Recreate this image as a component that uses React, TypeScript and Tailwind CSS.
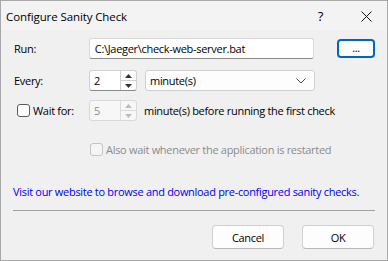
import React from "react";

function Spin({ value, disabled }: { value: string; disabled?: boolean }) {
  const border = disabled ? "border-[#d9d9d9] bg-[#f7f7f7]" : "border-[#d0d0d0] border-b-[#8a8a8a] bg-white";
  const arrow = disabled ? "#bdbdbd" : "#333333";
  return (
    <div className={`flex h-[21px] w-[48px] rounded-[3px] border ${border}`}>
      <div className={`flex-1 pl-[4px] leading-[19px] ${disabled ? "text-[#8c8c8c]" : "text-black"}`}>{value}</div>
      <div className={`flex w-[16px] flex-col border-l ${disabled ? "border-[#dcdcdc]" : "border-[#cfcfcf]"}`}>
        <div className={`flex flex-1 items-center justify-center border-b ${disabled ? "border-[#dcdcdc]" : "border-[#cfcfcf]"}`}>
          <svg width="7" height="4" viewBox="0 0 7 4"><path d="M0 4 L3.5 0 L7 4 Z" fill={arrow} /></svg>
        </div>
        <div className="flex flex-1 items-center justify-center">
          <svg width="7" height="4" viewBox="0 0 7 4"><path d="M0 0 L3.5 4 L7 0 Z" fill={arrow} /></svg>
        </div>
      </div>
    </div>
  );
}

function Check({ disabled }: { disabled?: boolean }) {
  return (
    <div
      className={`h-[13px] w-[13px] shrink-0 rounded-[3px] border ${
        disabled ? "border-[#c4c4c4] bg-[#f5f5f5]" : "border-[#5a5a5a] bg-white"
      }`}
    />
  );
}

export default function App() {
  return (
    <div
      className="flex h-[261px] w-[388px] flex-col overflow-hidden border border-[#a8a8a8] bg-[#f0f0f0] text-[11px] leading-[15px] tracking-[-0.3px] text-black"
      style={{ fontFamily: '"Open Sans", "Noto Sans", sans-serif' }}
    >
      {/* title bar */}
      <div className="flex h-[30px] shrink-0 items-center bg-[#f3f3f3]">
        <span className="ml-[5px] flex-1 text-[11.5px] tracking-[-0.1px]">Configure Sanity Check</span>
        <span className="mr-[38px] text-[13px]">?</span>
        <svg className="mr-[15px]" width="11" height="11" viewBox="0 0 11 11">
          <path d="M0.5 0.5 L10.5 10.5 M10.5 0.5 L0.5 10.5" stroke="#111" strokeWidth="1" />
        </svg>
      </div>

      <div className="flex flex-1 flex-col px-[12px]">
        {/* Run */}
        <div className="mt-[7px] flex h-[21px] items-center">
          <span className="w-[76px] pl-[1px]">Run:</span>
          <div className="h-[21px] w-[226px] rounded-[3px] border border-[#d9d9d9] border-b-[#8a8a8a] bg-white pl-[5px] leading-[19px]">
            C:\Jaeger\check-web-server.bat
          </div>
          <button className="ml-[23px] flex h-[19px] w-[38px] items-center justify-center rounded-[4px] border-2 border-[#0067c0] bg-[#fdfdfd] pb-[3px] text-[11px]">
            ...
          </button>
        </div>

        {/* Every */}
        <div className="mt-[11px] flex h-[21px] items-center">
          <span className="w-[76px] pl-[1px]">Every:</span>
          <Spin value="2" />
          <div className="ml-[8px] flex h-[21px] w-[170px] items-center rounded-[3px] border border-[#d0d0d0] bg-[#fdfdfd] pl-[4px]">
            <span className="flex-1">minute(s)</span>
            <svg className="mr-[8px]" width="10" height="6" viewBox="0 0 10 6">
              <path d="M0.5 0.5 L5 5 L9.5 0.5" stroke="#444" strokeWidth="1" fill="none" />
            </svg>
          </div>
        </div>

        {/* Wait for */}
        <div className="mt-[9px] flex h-[21px] items-center">
          <div className="flex w-[76px] items-center gap-[3px] pl-[4px]">
            <Check />
            <span>Wait for:</span>
          </div>
          <Spin value="5" disabled />
          <span className="ml-[7px] whitespace-nowrap">minute(s) before running the first check</span>
        </div>

        {/* Also wait */}
        <div className="mt-[21px] flex h-[15px] items-center gap-[3px] pl-[77px] text-[#8c8c8c]">
          <Check disabled />
          <span className="whitespace-nowrap">Also wait whenever the application is restarted</span>
        </div>

        {/* link */}
        <div className="mt-[27px] whitespace-nowrap text-[#0000ee]">
          Visit our website to browse and download pre-configured sanity checks.
        </div>

        <div className="mt-[11px] h-px bg-[#a0a0a0]" />

        <div className="mt-[14px] flex justify-end gap-[18px] pr-[1px]">
          <button className="h-[24px] w-[72px] rounded-[4px] border border-[#d0d0d0] border-b-[#b8b8b8] bg-[#fdfdfd]">
            Cancel
          </button>
          <button className="h-[24px] w-[72px] rounded-[4px] border border-[#d0d0d0] border-b-[#b8b8b8] bg-[#fdfdfd]">
            OK
          </button>
        </div>
      </div>
    </div>
  );
}
